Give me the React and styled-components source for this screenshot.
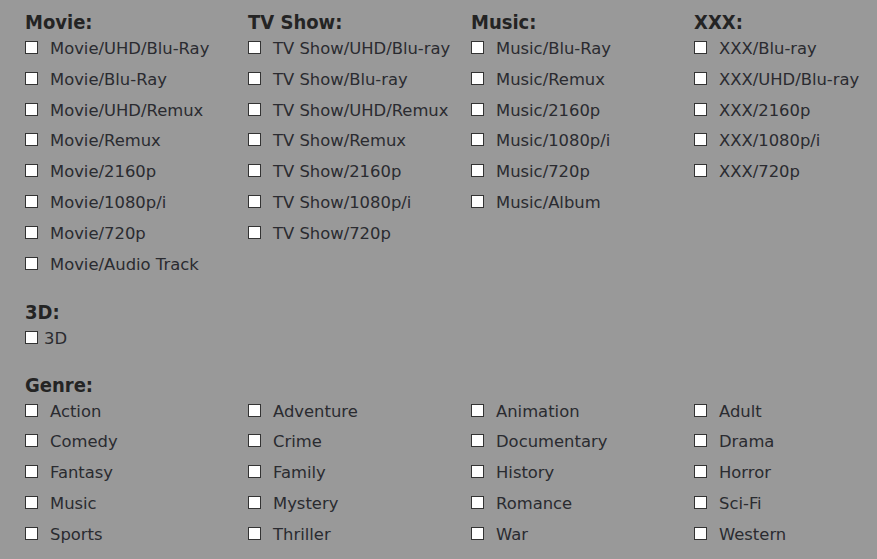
import React from 'react';
import styled, { createGlobalStyle } from 'styled-components';

const GlobalStyle = createGlobalStyle`
  html, body {
    margin: 0;
    padding: 0;
    background: #999999;
  }
  body {
    font-family: "DejaVu Sans", Verdana, sans-serif;
    color: #2d2d2d;
  }
`;

const Page = styled.div`
  width: 877px;
  height: 559px;
  padding: 11px 0 0 25px;
  box-sizing: border-box;
  background: #999999;
  overflow: hidden;
`;

const Row = styled.div`
  display: grid;
  grid-template-columns: repeat(4, 223px);
`;

const Section = styled.section`
  margin-top: ${props => props.$gap || 0}px;
`;

const Heading = styled.h3`
  margin: 0;
  font-family: "DejaVu Sans Condensed", "DejaVu Sans", sans-serif;
  font-stretch: condensed;
  font-size: 20px;
  font-weight: bold;
  line-height: 22px;
  color: #242424;
`;

const List = styled.div`
  display: flex;
  flex-direction: column;
`;

const Item = styled.label`
  display: flex;
  align-items: center;
  height: 30.85px;
  font-size: 16.4px;
  color: #2a2b30;
  white-space: nowrap;
`;

const Box = styled.span`
  width: 11px;
  height: 11px;
  background: #ffffff;
  border: 1px solid #333333;
  flex: none;
  margin-right: ${props => props.$tight ? 6 : 12}px;
  margin-top: -2px;
`;

const groups = [
  {
    title: 'Movie:',
    items: ['Movie/UHD/Blu-Ray', 'Movie/Blu-Ray', 'Movie/UHD/Remux', 'Movie/Remux', 'Movie/2160p', 'Movie/1080p/i', 'Movie/720p', 'Movie/Audio Track'],
  },
  {
    title: 'TV Show:',
    items: ['TV Show/UHD/Blu-ray', 'TV Show/Blu-ray', 'TV Show/UHD/Remux', 'TV Show/Remux', 'TV Show/2160p', 'TV Show/1080p/i', 'TV Show/720p'],
  },
  {
    title: 'Music:',
    items: ['Music/Blu-Ray', 'Music/Remux', 'Music/2160p', 'Music/1080p/i', 'Music/720p', 'Music/Album'],
  },
  {
    title: 'XXX:',
    items: ['XXX/Blu-ray', 'XXX/UHD/Blu-ray', 'XXX/2160p', 'XXX/1080p/i', 'XXX/720p'],
  },
];

const genres = [
  'Action', 'Adventure', 'Animation', 'Adult',
  'Comedy', 'Crime', 'Documentary', 'Drama',
  'Fantasy', 'Family', 'History', 'Horror',
  'Music', 'Mystery', 'Romance', 'Sci-Fi',
  'Sports', 'Thriller', 'War', 'Western',
];

const Check = ({ label, tight }) => (
  <Item>
    <Box $tight={tight} />
    {label}
  </Item>
);

const App = () => (
  <>
    <GlobalStyle />
    <Page>
      <Row>
        {groups.map(g => (
          <List key={g.title}>
            <Heading>{g.title}</Heading>
            {g.items.map(i => <Check key={i} label={i} />)}
          </List>
        ))}
      </Row>

      <Section $gap={21}>
        <Heading>3D:</Heading>
        <List>
          <Check label="3D" tight />
        </List>
      </Section>

      <Section $gap={20}>
        <Heading>Genre:</Heading>
        <Row>
          {genres.map(g => <Check key={g} label={g} />)}
        </Row>
      </Section>
    </Page>
  </>
);

export default App;
